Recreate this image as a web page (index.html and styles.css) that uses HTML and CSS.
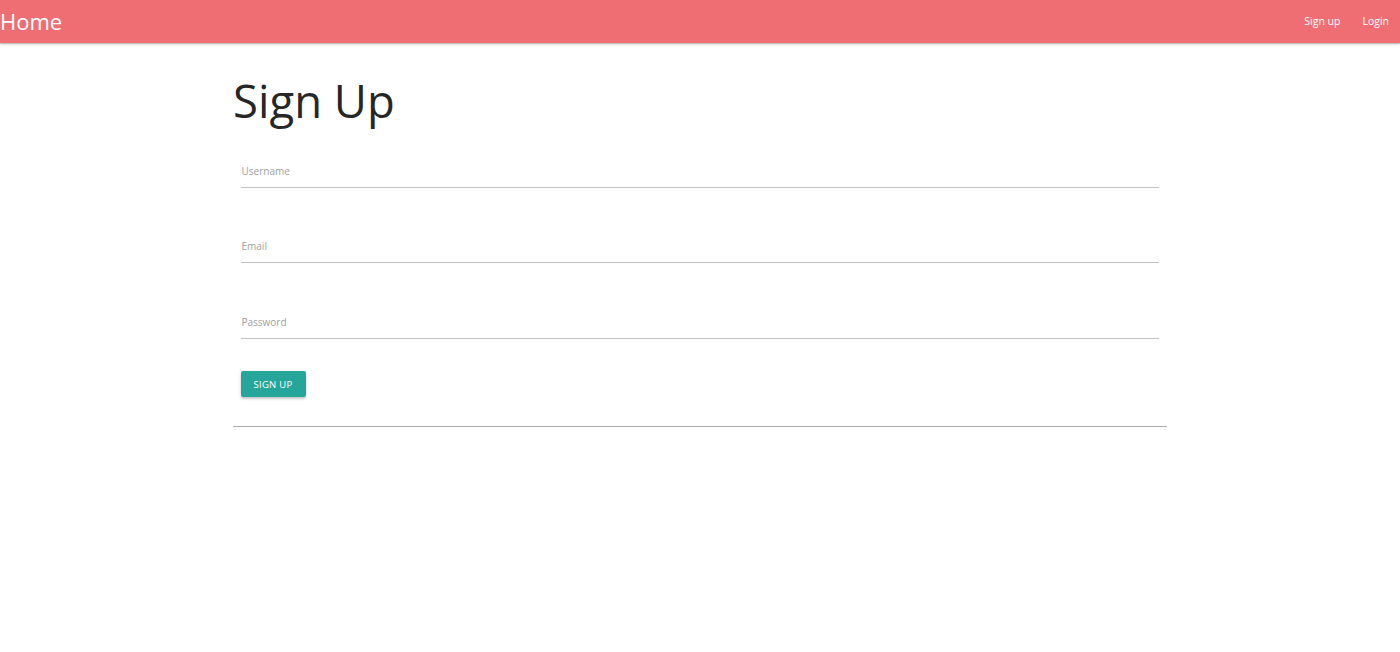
FILE: index.html
```html
<!DOCTYPE html>
<html lang="en">
<head>
<meta charset="utf-8">
<title>Sign Up</title>
<link rel="stylesheet" href="styles.css">
</head>
<body>
<nav class="nav">
  <a class="brand" href="#">Home</a>
  <ul class="nav-links">
    <li><a href="#">Sign up</a></li>
    <li><a href="#">Login</a></li>
  </ul>
</nav>
<main class="container">
  <h1 class="title">Sign Up</h1>
  <form class="form">
    <div class="field"><input class="input" type="text" placeholder="Username"></div>
    <div class="field"><input class="input" type="email" placeholder="Email"></div>
    <div class="field"><input class="input" type="password" placeholder="Password"></div>
    <button class="btn" type="button">Sign up</button>
  </form>
  <hr class="divider">
</main>
</body>
</html>
```
FILE: styles.css
```css
* { box-sizing: border-box; }
html, body { margin: 0; padding: 0; }
body {
  font-family: "Open Sans", "Noto Sans", sans-serif;
  color: rgba(0,0,0,0.87);
  background: #fff;
}
.nav {
  height: 43px;
  background: #ef6e73;
  display: flex;
  align-items: center;
  justify-content: space-between;
  box-shadow: 0 1px 3px rgba(0,0,0,0.2), 0 1px 1px rgba(0,0,0,0.14);
}
.brand {
  color: #fff;
  text-decoration: none;
  font-size: 22px;
  line-height: 43px;
}
.nav-links {
  list-style: none;
  display: flex;
  margin: 0;
  padding: 0;
}
.nav-links a {
  display: block;
  color: #fff;
  text-decoration: none;
  font-size: 10.5px;
  padding: 0 11px;
  line-height: 43px;
}
.container {
  width: 934px;
  margin: 0 auto;
}
.title {
  font-size: 45.5px;
  font-weight: 400;
  line-height: 48px;
  margin: 33px 0 34px;
  letter-spacing: 0;
}
.form {
  padding: 0 8px 0 7.5px;
  display: flex;
  flex-direction: column;
  align-items: flex-start;
}
.field {
  width: 100%;
  margin-bottom: 45px;
}
.field:nth-child(2) { margin-bottom: 46px; }
.field:nth-child(3) { margin-bottom: 32px; }
.input {
  display: block;
  width: 100%;
  height: 30px;
  border: none;
  border-bottom: 1px solid #c2c2c2;
  outline: none;
  padding: 0 0 4px 1px;
  font-family: inherit;
  font-size: 10px;
  background: transparent;
}
.input::placeholder { color: #9e9e9e; }
.btn {
  height: 26px;
  width: 65px;
  border: none;
  border-radius: 2px;
  background: #26a69a;
  color: #fff;
  font-family: inherit;
  font-size: 9.5px;
  text-transform: uppercase;
  letter-spacing: 0.3px;
  padding: 0;
  box-shadow: 0 2px 2px rgba(0,0,0,0.14), 0 1px 4px rgba(0,0,0,0.12);
}
.divider {
  border: none;
  border-top: 1px solid #aaa;
  margin: 29px 0 0;
}
```
